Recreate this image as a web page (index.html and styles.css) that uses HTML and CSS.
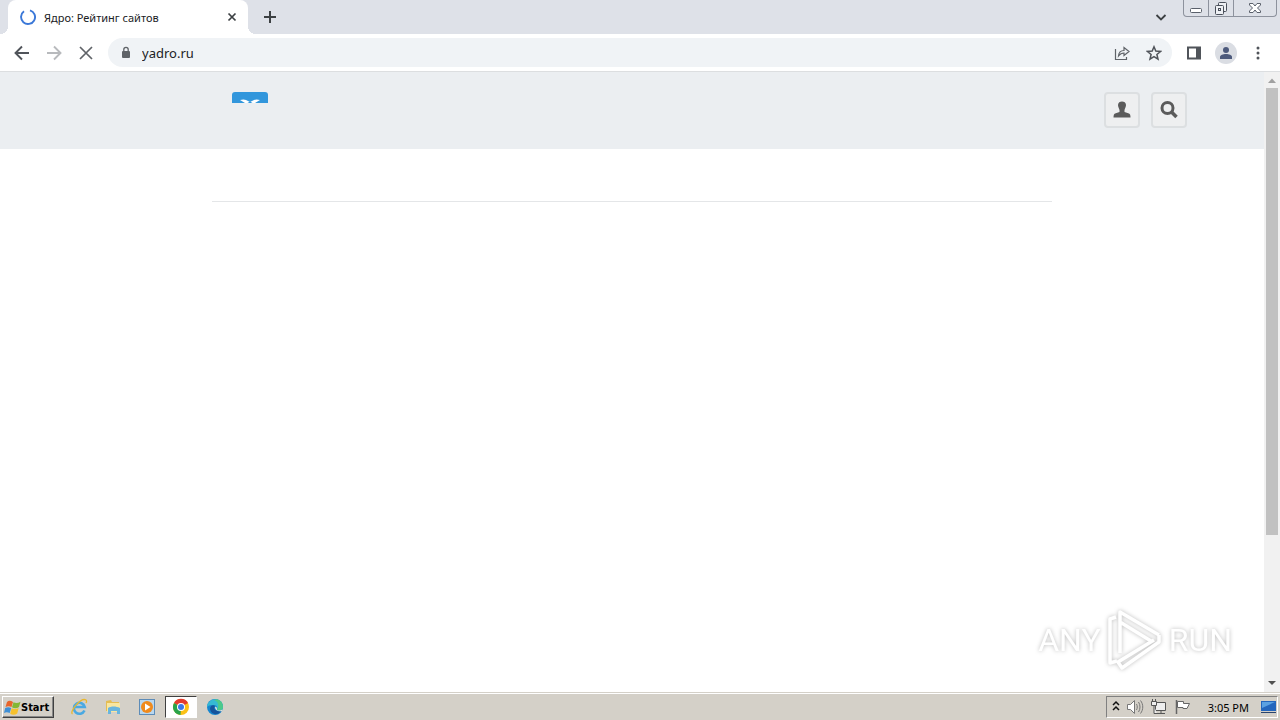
FILE: index.html
```html
<!DOCTYPE html>
<html lang="ru">
<head>
    <meta charset="UTF-8">
    <meta name="viewport" content="width=device-width, initial-scale=1.0">
    <title>Ядро: Рейтинг сайтов</title>
    <link rel="stylesheet" href="styles.css">
</head>
<body>
    <div class="tab-bar">
        <div class="tab">
            <svg class="spinner" width="16" height="16" viewBox="0 0 16 16"><path d="M10 1.300A7 7 0 1 1 4 2.300" fill="none" stroke="#3b78d8" stroke-width="1.900"/></svg>
            <span class="tab-title">Ядро: Рейтинг сайтов</span>
            <button class="icon-button" aria-label="Close tab">
                <svg width="16" height="16" viewBox="0 0 16 16"><path d="M4.500 4.500l7 7M11.500 4.500l-7 7" stroke="#3c4043" stroke-width="1.700"/></svg>
            </button>
        </div>
        <button class="icon-button new-tab" aria-label="New tab">
            <svg width="16" height="16" viewBox="0 0 16 16"><path d="M8 2v12M2 8h12" stroke="#3c4043" stroke-width="2"/></svg>
        </button>
        <button class="icon-button tab-search" aria-label="Search tabs">
            <svg width="16" height="16" viewBox="0 0 16 16"><path d="M3.500 6L8 10.500L12.500 6" fill="none" stroke="#3c4043" stroke-width="1.800"/></svg>
        </button>
        <div class="window-controls">
            <button class="minimize" aria-label="Minimize">
                <svg width="24" height="16" viewBox="0 0 24 16"><rect x="6.500" y="8.500" width="11" height="4" rx="1" fill="#fff" stroke="#5a606b"/></svg>
            </button>
            <button class="restore" aria-label="Restore">
                <svg width="24" height="16" viewBox="0 0 24 16" fill="#eef0f4" stroke="#4a505b"><rect x="9.500" y="2.500" width="8" height="9" rx="1"/><rect x="6.500" y="5.500" width="8" height="9" rx="1"/><rect x="9.500" y="8.500" width="2" height="2"/></svg>
            </button>
            <button class="close" aria-label="Close">
                <svg width="24" height="16" viewBox="0 0 24 16"><path d="M6.500 3.500h3.500l2 2.500 2-2.500h3.500v1.500l-3 3 3 3v1.500H14L12 10l-2 2.500H6.500V11l3-3-3-3z" fill="#fff" stroke="#5a606b"/></svg>
            </button>
        </div>
    </div>

    <div class="toolbar">
        <button class="icon-button" aria-label="Back">
            <svg width="16" height="16" viewBox="0 0 16 16"><path d="M15 8H2M8 1.500L1.500 8L8 14.500" fill="none" stroke="#50545a" stroke-width="1.900"/></svg>
        </button>
        <button class="icon-button" aria-label="Forward">
            <svg width="16" height="16" viewBox="0 0 16 16"><path d="M1 8h13M8 1.500L14.500 8L8 14.500" fill="none" stroke="#b8babd" stroke-width="1.900"/></svg>
        </button>
        <button class="icon-button" aria-label="Stop">
            <svg width="16" height="16" viewBox="0 0 16 16"><path d="M2 2l12 12M14 2L2 14" stroke="#5f6368" stroke-width="1.700"/></svg>
        </button>
        <div class="address-bar">
            <svg width="12" height="14" viewBox="0 0 12 14"><rect x="2" y="5" width="8" height="7" rx="1" fill="#5f6368"/><path d="M3.800 6V3.500a2.200 2.200 0 0 1 4.400 0V6" fill="none" stroke="#5f6368" stroke-width="1.300"/></svg>
            <input type="text" value="yadro.ru" aria-label="Address">
            <button class="icon-button" aria-label="Share">
                <svg width="16" height="16" viewBox="0 0 16 16" fill="none" stroke="#5f6368" stroke-width="1.200"><path d="M1.500 4v10.500h11V12"/><path d="M4.500 11c.3-4 2.500-5.500 5.500-5.500V2.500L15 6.500l-5 4V8C7.500 8 6 9 4.500 11z"/></svg>
            </button>
            <button class="icon-button" aria-label="Bookmark">
                <svg width="16" height="16" viewBox="0 0 16 16"><path d="M8 1.800l1.800 4.300 4.700.4-3.600 3 1.100 4.600L8 11.600l-4 2.500 1.100-4.600-3.600-3 4.700-.4z" fill="none" stroke="#50545a" stroke-width="1.500"/></svg>
            </button>
        </div>
        <button class="icon-button" aria-label="Side panel">
            <svg width="16" height="16" viewBox="0 0 16 16"><path d="M2 2.500h12v11H2z" fill="none" stroke="#50545a" stroke-width="2"/><path d="M10 2h4.500v12H10z" fill="#50545a"/></svg>
        </button>
        <button class="icon-button profile" aria-label="Profile">
            <svg width="22" height="22" viewBox="0 0 22 22"><circle cx="11" cy="11" r="11" fill="#dadde3"/><circle cx="11" cy="8" r="3" fill="#4d5a7c"/><path d="M5 17v-2c0-2 3-3 6-3s6 1 6 3v2z" fill="#4d5a7c"/></svg>
        </button>
        <button class="icon-button menu" aria-label="Menu">
            <svg width="16" height="16" viewBox="0 0 16 16" fill="#50545a"><circle cx="8" cy="3" r="1.500"/><circle cx="8" cy="8" r="1.500"/><circle cx="8" cy="13" r="1.500"/></svg>
        </button>
    </div>

    <div class="viewport">
        <div class="page">
            <header class="site-header">
                <div class="site-header-inner">
                    <a class="logo" href="#" aria-label="Ядро">
                        <svg width="36" height="11" viewBox="0 0 36 11"><path d="M0 11V3a3 3 0 0 1 3-3h30a3 3 0 0 1 3 3v8z" fill="#3196dc"/><path d="M8 8c3-1 5-.5 6 0l4 2 4-2c1-.5 3-1 6 0l-5 3H13z" fill="#fff"/><path d="M15.500 11l2.500-1.500 2.500 1.500z" fill="#3196dc"/></svg>
                    </a>
                </div>
                <div class="header-buttons">
                    <button aria-label="Login">
                        <svg width="18" height="18" viewBox="0 0 18 18"><path d="M5 4C5 1.500 7 .5 9 .5s4 1 4 3.500c0 2-1 3-1.500 5v2l4.500 1.500c1 .5 1.500 1.500 1.500 4H.5c0-2.500.5-3.500 1.500-4L6.500 11V9C6 7 5 6 5 4z" fill="#5b5b5b"/></svg>
                    </button>
                    <button aria-label="Search">
                        <svg width="18" height="18" viewBox="0 0 18 18" fill="none" stroke="#5b5b5b"><circle cx="7.500" cy="7" r="5.500" stroke-width="3"/><path d="M11.500 11l5 5" stroke-width="3.500"/></svg>
                    </button>
                </div>
            </header>
            <main class="content"></main>
        </div>
        <div class="scrollbar">
            <svg width="16" height="16" viewBox="0 0 16 16"><path d="M4 11l4-4.500 4 4.500z" fill="#a0a0a0"/></svg>
            <div class="track"><div class="thumb"></div></div>
            <svg width="16" height="16" viewBox="0 0 16 16"><path d="M4 5h8l-4 4z" fill="#505050"/></svg>
        </div>
        <div class="watermark">
            <span>ANY</span>
            <svg width="60" height="64" viewBox="0 0 60 64" fill="none" stroke="#fff" stroke-width="3.500" stroke-linejoin="round"><path d="M11 9L5 11v44l7-2"/><path d="M15 45V4l39 23M15 14l31 19"/><path d="M54 27v7L17 60l-4-6 36-22"/></svg>
            <span>RUN</span>
        </div>
    </div>

    <div class="taskbar">
        <button class="start">
            <svg width="17" height="17" viewBox="0 0 17 17"><path d="M3 3c2-2 4-1 6 0L7.500 8c-2-1-4-1-6 0z" fill="#e8652b"/><path d="M9.500 3.300c2 1 4.500 1 7-.5L15 8c-2 1.500-5 1.500-7 .3z" fill="#83b735"/><path d="M1.200 9c2-1 4-1 6 0l-1.500 5c-2-1-4-1-5.700 0z" fill="#3f8fd6"/><path d="M7.700 9.300c2 1 5 1 7-.3l-1.500 5.500c-2 1.500-5 1.500-7 .3z" fill="#f6c12d"/></svg>
            Start
        </button>
        <div class="quick-launch">
            <button aria-label="Internet Explorer">
                <svg width="18" height="18" viewBox="0 0 18 18" fill="none"><path d="M14.500 12.500a5.500 5.500 0 1 1 .3-3.500H5" stroke="#4aa9e2" stroke-width="2.500"/><path d="M2.500 16C-1 14 11-1 16 2c1 .8.500 2 0 3" stroke="#e9b72e" stroke-width="1.300"/></svg>
            </button>
            <button aria-label="Explorer">
                <svg width="18" height="18" viewBox="0 0 18 18"><path d="M2 3l5-1 1 2h7v9H2z" fill="#e4bd54"/><path d="M3 5h13v9H3z" fill="#f8e6a0"/><path d="M4 10c3-2 8-2 12 0v6h-3v-3H7v3H4z" fill="#69b5de"/></svg>
            </button>
            <button aria-label="Media Player">
                <svg width="18" height="18" viewBox="0 0 18 18"><rect x="1.500" y="1.500" width="15" height="15" fill="#b9d7ef" stroke="#5d8cb8"/><circle cx="9" cy="9" r="6" fill="#f08a1c"/><path d="M7 5.500v7L12.500 9z" fill="#fff"/></svg>
            </button>
            <button class="active" aria-label="Chrome">
                <svg width="18" height="18" viewBox="0 0 18 18"><circle cx="9" cy="9" r="8" fill="#fbc116"/><path d="M9 9L2 5a8 8 0 0 1 14 0z" fill="#e33b2e"/><path d="M9 9l-.5 8A8 8 0 0 1 2 5z" fill="#29a34a"/><circle cx="9" cy="9" r="4" fill="#fff"/><circle cx="9" cy="9" r="3" fill="#3b78e7"/></svg>
            </button>
            <button aria-label="Edge">
                <svg width="18" height="18" viewBox="0 0 18 18"><circle cx="9" cy="9" r="8" fill="#1686cf"/><path d="M3 4a8 8 0 0 1 14 5c0 3-3 4-6 3 1-2 0-5-3-5S3 7 1 9c0-2 1-4 2-5z" fill="#35b9d4"/><path d="M11 1.300A8 8 0 0 1 17 9c0 3-3 4-6 3 2-4 2-8-3-10z" fill="#4dc98a"/><path d="M4 11c0-3 3-5 5-3-2 2 0 6 6 5-3 5-10 4-11-2z" fill="#16539b"/><path d="M9 9c2-1 2 2 2 3 2 1 4 .5 5.500-.5L16 13c-4 1-7-1-7-4z" fill="#e4e5df"/></svg>
            </button>
        </div>
        <div class="tray">
            <svg class="chevrons" width="8" height="14" viewBox="0 0 8 14"><path d="M1 5l3-3 3 3M1 10l3-3 3 3" fill="none" stroke="#111" stroke-width="1.500"/></svg>
            <svg width="18" height="16" viewBox="0 0 18 16" fill="none" stroke="#777"><path d="M1.500 5.500h3l4-4v13l-4-4h-3z" fill="#fff"/><path d="M10.500 5c1 2 1 4 0 6M12.500 3c2 3 2 7 0 10M14.500 1.500c3 4 3 9 0 13"/></svg>
            <svg width="18" height="16" viewBox="0 0 18 16" fill="#eee" stroke="#555"><path d="M5.500 3.500h10v8h-10zM7 14.500h8M11 12v2"/><path d="M1.500 2.500h5v4h-5zM2.500 0v2M5.500 0v2M4 7v7.500h3"/></svg>
            <svg width="18" height="16" viewBox="0 0 18 16"><path d="M2.500 1v14" stroke="#666" stroke-width="1.500"/><path d="M3.500 2.500h6v2h6L13 9.500h-4v-1H3.500z" fill="#fff" stroke="#666"/></svg>
            <span class="clock">3:05 PM</span>
            <svg width="16" height="16" viewBox="0 0 16 16"><path d="M1 2h15v10H1z" fill="#2466bd"/><path d="M2 3h13L2 9z" fill="#5ba1e2"/><path d="M1 13h15v1H1z" fill="#29446e"/></svg>
        </div>
    </div>
</body>
</html>
```
FILE: styles.css
```css
* {
    box-sizing: border-box;
}
body {
    display: flex;
    flex-direction: column;
    height: 100vh;
    margin: 0;
    background-color: #fff;
    font-family: "Noto Sans", sans-serif;
    font-size: 11px;
    color: #202124;
    overflow: hidden;
}
button {
    padding: 0;
    border: none;
    background: none;
    font: inherit;
    color: inherit;
}
svg {
    display: block;
    flex: none;
}
.icon-button {
    display: flex;
    flex: none;
}
.tab-bar {
    display: flex;
    align-items: center;
    height: 34px;
    padding-left: 8px;
    background-color: #dee1e8;
}
.tab {
    position: relative;
    display: flex;
    align-items: center;
    gap: 8px;
    width: 240px;
    height: 34px;
    padding: 0 8px 0 12px;
    border-radius: 8px 8px 0 0;
    background-color: #fff;
}
/* outward curves at the foot of the tab */
.tab::before, .tab::after {
    content: "";
    position: absolute;
    bottom: 0;
    width: 8px;
    height: 8px;
}
.tab::before {
    left: -8px;
    background: radial-gradient(circle at 0 0, transparent 8px, #fff 8px);
}
.tab::after {
    right: -8px;
    background: radial-gradient(circle at 100% 0, transparent 8px, #fff 8px);
}
.tab-title {
    flex: 1;
}
.new-tab {
    margin-left: 14px;
}
.tab-search {
    margin: 0 14px 0 auto;
}
.window-controls {
    display: flex;
    align-self: flex-start;
    height: 17px;
    margin-right: 3px;
    border: 1px solid #8d929d;
    border-top: none;
    border-radius: 0 0 4px 4px;
}
.window-controls button {
    display: flex;
    justify-content: center;
    width: 25px;
    border-right: 1px solid #8d929d;
}
.window-controls .close {
    width: 42px;
    border-right: none;
}
.toolbar {
    display: flex;
    align-items: center;
    gap: 16px;
    height: 38px;
    padding: 0 14px;
    border-bottom: 1px solid #dcdee0;
}
.address-bar {
    display: flex;
    flex: 1;
    align-items: center;
    gap: 16px;
    height: 29px;
    margin-left: -2px;
    margin-right: -2px;
    padding: 0 10px 0 12px;
    border-radius: 15px;
    background-color: #f0f3f6;
}
.address-bar input {
    flex: 1;
    min-width: 0;
    margin-left: -6px;
    padding: 0;
    border: none;
    outline: none;
    background: none;
    font-family: "Noto Sans", sans-serif;
    font-size: 13px;
    color: #202124;
}
.profile {
    margin: 0 -3px;
}
.viewport {
    position: relative;
    display: flex;
    flex: 1;
    min-height: 0;
}
.page {
    flex: 1;
}
.site-header {
    position: relative;
    height: 77px;
    background-color: #ebeef1;
}
.site-header-inner {
    display: flex;
    max-width: 840px;
    margin: 0 auto;
    padding: 20px;
}
.header-buttons {
    position: absolute;
    top: 20px;
    right: 77px;
    display: flex;
    gap: 11px;
}
.header-buttons button {
    display: flex;
    align-items: center;
    justify-content: center;
    width: 36px;
    height: 36px;
    border: 2px solid #dcdfe1;
    border-radius: 4px;
    background-color: #eeeff0;
}
.content {
    max-width: 840px;
    height: 53px;
    margin: 0 auto;
    border-bottom: 1px solid #e4e6e8;
}
.scrollbar {
    display: flex;
    flex-direction: column;
    width: 16px;
    background-color: #f1f1f1;
}
.track {
    flex: 1;
    padding: 0 2px;
}
.thumb {
    height: 76%;
    background-color: #c1c1c1;
}
.watermark {
    position: absolute;
    right: 48px;
    bottom: 20px;
    display: flex;
    align-items: center;
    gap: 4px;
    font-family: Roboto, sans-serif;
    font-size: 32px;
    color: #fff;
    filter: drop-shadow(0 0 2px #bbb);
}
.taskbar {
    display: flex;
    align-items: center;
    height: 28px;
    padding: 1px 2px 0;
    border-top: 1px solid #d4d0c8;
    box-shadow: inset 0 1px #fff;
    background-color: #d4d0c8;
}
.start {
    display: flex;
    align-items: center;
    width: 52px;
    height: 22px;
    padding-left: 1px;
    border: 1px solid;
    border-color: #fff #404040 #404040 #fff;
    box-shadow: inset -1px -1px #888;
    font-family: "DejaVu Sans Condensed", "DejaVu Sans", sans-serif;
    font-weight: bold;
    color: #000;
}
.quick-launch {
    display: flex;
    gap: 2px;
    margin-left: 9px;
}
.quick-launch button {
    display: flex;
    align-items: center;
    justify-content: center;
    width: 32px;
    height: 22px;
}
.quick-launch .active {
    border: 1px solid;
    border-color: #404040 #fff #fff #404040;
    background-color: #fff;
}
.tray {
    display: flex;
    align-items: center;
    gap: 6px;
    height: 22px;
    margin-left: auto;
    padding: 0 1px 0 5px;
    border: 1px solid;
    border-color: #808080 #fff #fff #808080;
    color: #000;
}
.clock {
    margin: 0 5px 0 10px;
}
```
